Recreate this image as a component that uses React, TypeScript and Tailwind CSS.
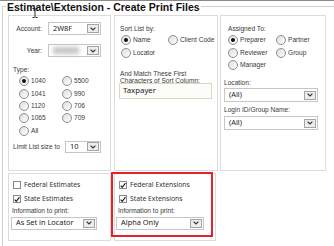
import React from "react";

const lbl = "text-[6.6px] leading-[8px] text-[#3a3a3a] whitespace-nowrap";
const val = "font-['Noto_Sans',sans-serif] text-[7.4px] text-[#222] whitespace-nowrap";

function Radio({ checked }: { checked?: boolean }) {
  return (
    <span className="w-[10px] h-[10px] shrink-0 rounded-full border border-[#8e8e8e] bg-linear-to-br from-[#dedede] to-white flex items-center justify-center">
      {checked && <span className="w-[4px] h-[4px] rounded-full bg-[#111]" />}
    </span>
  );
}

function Check({ checked }: { checked?: boolean }) {
  return (
    <span className="w-[8px] h-[8px] shrink-0 border border-[#8a8a8a] bg-white flex items-center justify-center">
      {checked && (
        <svg width="7" height="7" viewBox="0 0 7 7">
          <path d="M0.8 3.6 L2.6 5.6 L6.4 0.8" fill="none" stroke="#1a1a1a" strokeWidth="1.3" />
        </svg>
      )}
    </span>
  );
}

function Chevron() {
  return (
    <span className="w-[12px] h-[9px] mr-[1px] shrink-0 border border-[#a4a4a4] bg-[#ededed] flex items-center justify-center">
      <svg width="6" height="4" viewBox="0 0 6 4">
        <path d="M0.6 0.6 L3 3 L5.4 0.6" fill="none" stroke="#333" strokeWidth="1.2" />
      </svg>
    </span>
  );
}

function Select({ children, className }: { children?: React.ReactNode; className: string }) {
  return (
    <div className={`flex items-center justify-between border border-[#c6c6c6] bg-white ${className}`}>
      <div className="flex items-center pl-[4px]">{children}</div>
      <Chevron />
    </div>
  );
}

function RadioItem({ label, checked, className }: { label: string; checked?: boolean; className: string }) {
  return (
    <div className={`flex items-center ${className}`}>
      <Radio checked={checked} />
      <span className={`${lbl} ml-[2px]`}>{label}</span>
    </div>
  );
}

function CheckItem({ label, checked, className }: { label: string; checked?: boolean; className: string }) {
  return (
    <div className={`flex items-center h-[12px] ${className}`}>
      <Check checked={checked} />
      <span className="font-['Noto_Sans',sans-serif] text-[6.8px] text-[#333] ml-[3px] whitespace-nowrap">{label}</span>
    </div>
  );
}

export default function App() {
  return (
    <div className="relative w-[334px] h-[246px] bg-white overflow-hidden border-t border-[#8a8a8a] font-['Liberation_Sans',Arial,sans-serif]">
      <div className="ml-[2px] mt-[5px] h-[240px] border-l border-t border-[#d0d0d0]">
        <div className="-mt-[5px] ml-[3px] w-fit bg-white px-[1px] text-[10.5px] leading-[11px] font-bold text-[#111] whitespace-nowrap">
          Estimate\Extension - Create Print Files
        </div>

        {/* top row */}
        <div className="flex mt-[2px] ml-[5px]">
          {/* left panel */}
          <div className="w-[103px] h-[156px] border border-[#dcdcdc] flex flex-col">
            <div className="flex items-center mt-[6px] h-[13px]">
              <span className={`${lbl} w-[33px] text-right`}>Account:</span>
              <Select className="ml-[6px] w-[53px] h-[13px]">
                <span className={val}>2W8F</span>
              </Select>
            </div>
            <div className="flex items-center mt-[9px] h-[13px]">
              <span className={`${lbl} w-[33px] text-right`}>Year:</span>
              <Select className="ml-[6px] w-[53px] h-[13px]">
                <span className="w-[26px] h-[7px] bg-[#c4c4c4] blur-[2px]" />
              </Select>
            </div>
            <div className={`${lbl} mt-[9px] pl-[4px]`}>Type:</div>
            <div className="mt-[1px] flex flex-col">
              {[
                ["1040", "5500", true],
                ["1041", "990", false],
                ["1120", "706", false],
                ["1065", "709", false],
              ].map(([a, b, c]) => (
                <div key={a as string} className="flex items-center h-[12.4px]">
                  <RadioItem label={a as string} checked={c as boolean} className="w-[53px] pl-[10px]" />
                  <RadioItem label={b as string} className="" />
                </div>
              ))}
              <div className="flex items-center h-[12.4px]">
                <RadioItem label="All" className="pl-[10px]" />
              </div>
            </div>
            <div className="flex items-center mt-[4px] h-[12px]">
              <span className={`${lbl} w-[52px] pl-[4px]`}>Limit List size to</span>
              <Select className="ml-[4px] w-[36px] h-[12px]">
                <span className={val}>10</span>
              </Select>
            </div>
          </div>

          {/* middle panel */}
          <div className="ml-[3px] w-[104px] h-[156px] border border-[#dcdcdc] flex flex-col">
            <div className={`${lbl} mt-[9px] pl-[5px]`}>Sort List by:</div>
            <div className="mt-[1px] flex items-center h-[12.4px]">
              <RadioItem label="Name" checked className="w-[53px] pl-[6px]" />
              <RadioItem label="Client Code" className="" />
            </div>
            <div className="flex items-center h-[12.4px]">
              <RadioItem label="Locator" className="pl-[6px]" />
            </div>
            <div className="mt-[11px] pl-[5px] text-[6.6px] leading-[7px] text-[#3a3a3a]">
              <div>And Match These First</div>
              <div>Characters of Sort Column:</div>
            </div>
            <div className="mt-[-1px] ml-[4px] w-[93px] h-[16px] border border-[#ddd6c0] bg-[#fcfcf8] flex items-center pl-[3px]">
              <span className={`${val} text-[7.8px]`}>Taxpayer</span>
            </div>
          </div>

          {/* right panel */}
          <div className="ml-[2px] w-[106px] h-[156px] border border-[#dcdcdc] flex flex-col">
            <div className={`${lbl} mt-[9px] pl-[7px]`}>Assigned To:</div>
            <div className="mt-[1px] flex items-center h-[12.5px]">
              <RadioItem label="Preparer" checked className="w-[55px] pl-[7px]" />
              <RadioItem label="Partner" className="" />
            </div>
            <div className="flex items-center h-[12.5px]">
              <RadioItem label="Reviewer" className="w-[55px] pl-[7px]" />
              <RadioItem label="Group" className="" />
            </div>
            <div className="flex items-center h-[12.5px]">
              <RadioItem label="Manager" className="pl-[7px]" />
            </div>
            <div className={`${lbl} mt-[7.5px] pl-[3px]`}>Location:</div>
            <Select className="mt-[1px] ml-[3px] w-[94px] h-[14px]">
              <span className={val}>(All)</span>
            </Select>
            <div className={`${lbl} mt-[4px] pl-[3px]`}>Login ID/Group Name:</div>
            <Select className="mt-[2px] ml-[3px] w-[94px] h-[14px]">
              <span className={val}>(All)</span>
            </Select>
          </div>
        </div>

        {/* bottom row */}
        <div className="flex mt-[2px] ml-[5px]">
          <div className="w-[103px] h-[68px] border border-[#dcdcdc] flex flex-col">
            <CheckItem label="Federal Estimates" className="mt-[5px] pl-[4px]" />
            <CheckItem label="State Estimates" checked className="mt-[2px] pl-[4px]" />
            <div className={`${lbl} mt-[1.5px] pl-[3px]`}>Information to print:</div>
            <Select className="mt-[2px] ml-[2px] w-[86px] h-[13px]">
              <span className={val}>As Set in Locator</span>
            </Select>
          </div>
          <div className="relative ml-[3px] w-[102px] h-[68px] border border-[#dcdcdc] flex flex-col">
            <CheckItem label="Federal Extensions" checked className="mt-[5px] pl-[4px]" />
            <CheckItem label="State Extensions" checked className="mt-[2px] pl-[4px]" />
            <div className={`${lbl} mt-[1.5px] pl-[3px]`}>Information to print:</div>
            <Select className="mt-[2px] ml-[1px] w-[88px] h-[13px]">
              <span className={val}>Alpha Only</span>
            </Select>
            <div className="absolute left-[-4px] top-[-2px] w-[102px] h-[65px] border-2 border-[#e8202a]" />
          </div>
        </div>
      </div>

      {/* mouse I-beam cursor over the title */}
      <svg className="absolute left-[32px] top-[7px]" width="6" height="10" viewBox="0 0 6 10">
        <path d="M0.5 0.5 H2.5 M3.5 0.5 H5.5 M3 1 V9 M0.5 9.5 H2.5 M3.5 9.5 H5.5" fill="none" stroke="#222" strokeWidth="1" />
      </svg>
    </div>
  );
}
